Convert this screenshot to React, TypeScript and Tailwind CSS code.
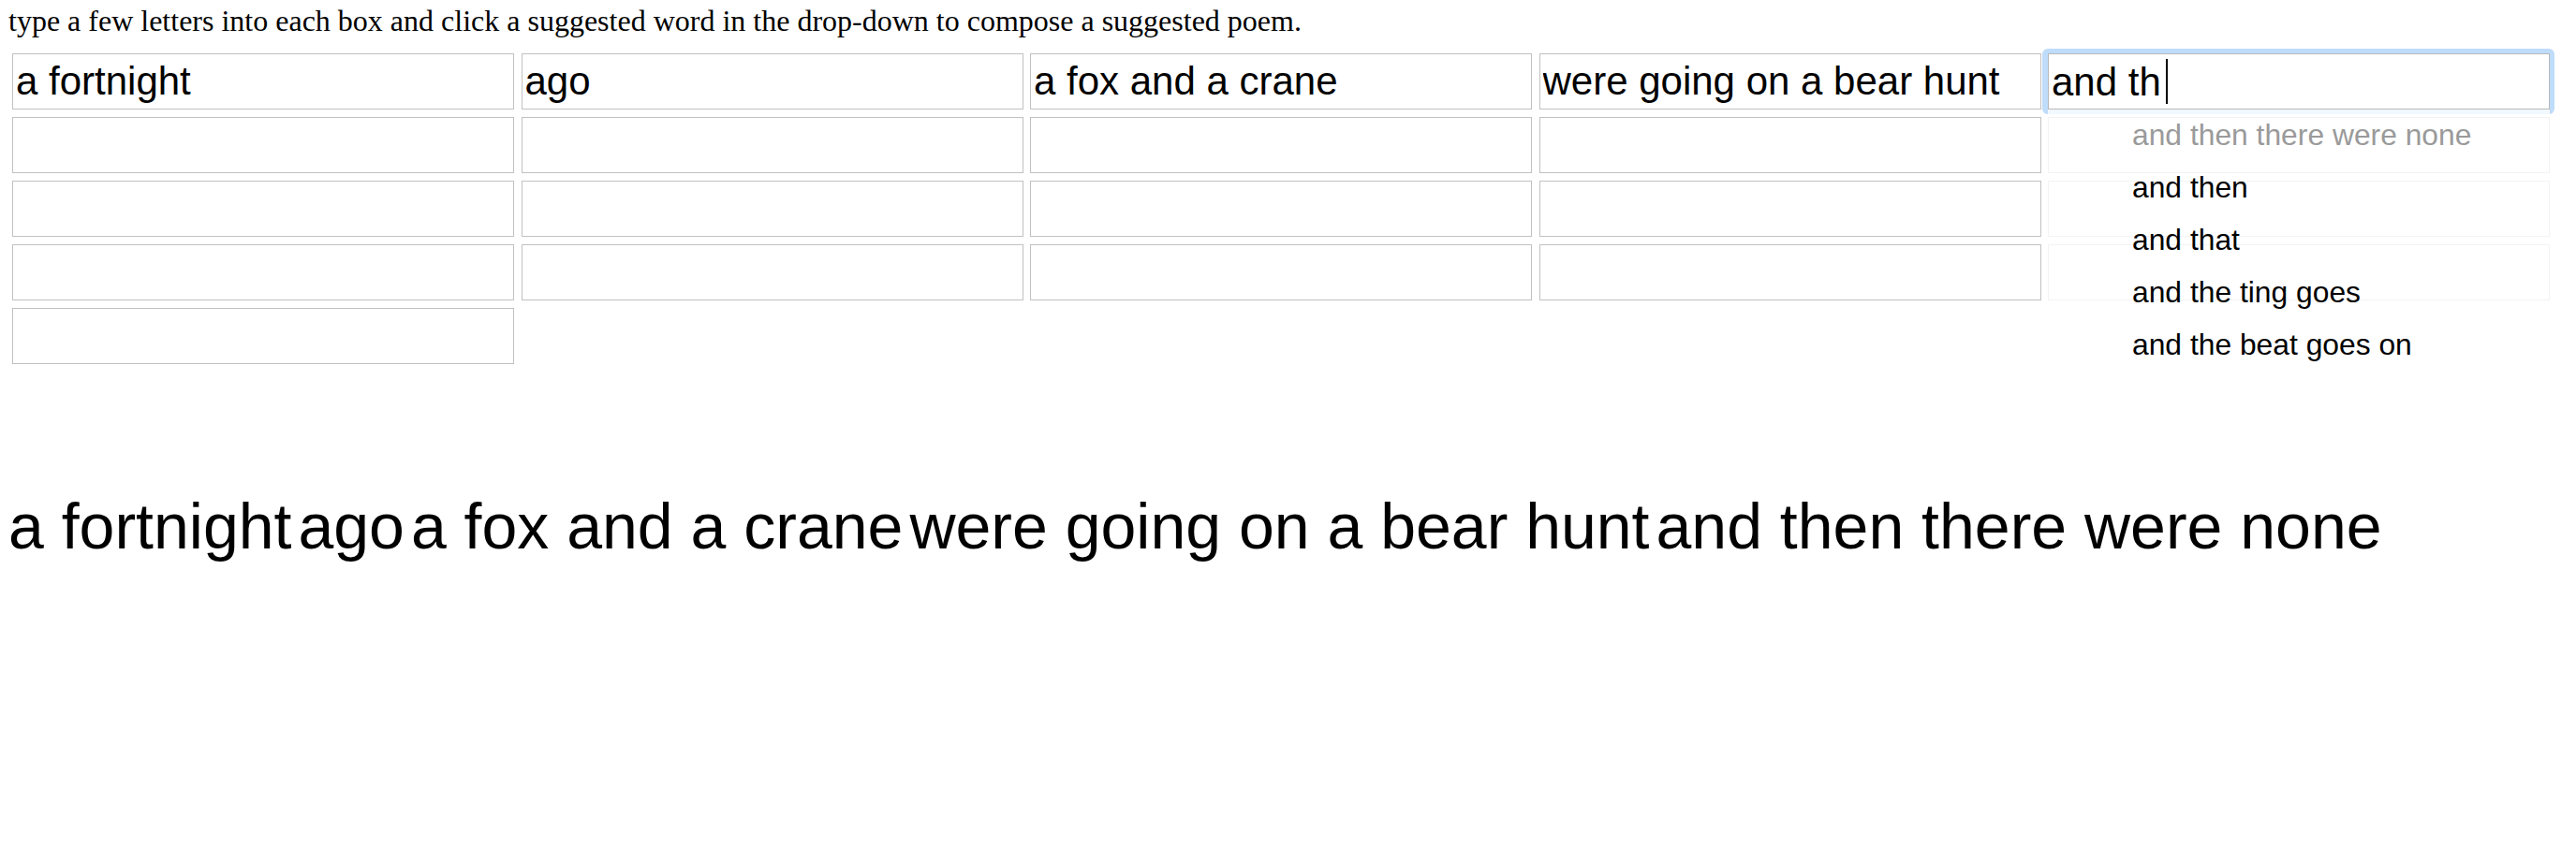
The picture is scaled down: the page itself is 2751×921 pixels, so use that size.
import React from 'react';

const lines = ['a fortnight', 'ago', 'a fox and a crane', 'were going on a bear hunt'];
const typed = 'and th';
const suggestions = [
  'and then there were none',
  'and then',
  'and that',
  'and the ting goes',
  'and the beat goes on',
];
const poem = [...lines, suggestions[0]];

const sans = "font-['Liberation_Sans',Arial,Helvetica,sans-serif]";

const Box: React.FC<{ value?: string }> = ({ value = '' }) => (
  <input
    type="text"
    readOnly
    value={value}
    className={`block w-full h-full border border-[#c1c1c1] bg-white px-[3px] text-[42px] text-black outline-none ${sans}`}
  />
);

const FocusedBox: React.FC = () => (
  <div className="relative z-20 h-full">
    {/* mac style focus ring */}
    <div className="absolute -top-[5px] -bottom-[5px] -left-[6px] -right-[5px] rounded-[6px] bg-[#bfdcfa]"></div>
    <div className={`relative flex items-center h-full border border-[#b9b9b9] bg-white px-[3px] text-[42px] text-black ${sans}`}>
      <span className="whitespace-pre">{typed}</span>
      <span className="inline-block w-[2px] h-[48px] bg-black ml-[5px]"></span>
    </div>

    {/* suggestion drop-down */}
    <ul className={`absolute left-0 right-0 top-[60px] bg-white/80 ${sans}`}>
      {suggestions.map((s, i) => (
        <li
          key={s}
          className={`h-[56px] flex items-center pl-[90px] text-[31.8px] ${i === 0 ? 'text-[#9a9a9a]' : 'text-black'}`}
        >
          {s}
        </li>
      ))}
    </ul>
  </div>
);

export default function App() {
  const cells: React.ReactNode[] = [];
  for (let i = 0; i < 21; i++) {
    if (i === 4) cells.push(<FocusedBox key={i} />);
    else cells.push(<Box key={i} value={i < 4 ? lines[i] : ''} />);
  }

  return (
    <div className="w-[2751px] min-h-[921px] bg-white text-black">
      <p className="pl-[9px] pt-[4px] text-[32px] leading-[36px] font-['Liberation_Serif','Times_New_Roman',serif]">
        type a few letters into each box and click a suggested word in the drop-down to compose a suggested poem.
      </p>

      <div className="mt-[17px] ml-[13px] grid grid-cols-[repeat(5,536px)] auto-rows-[60px] gap-x-[7.5px] gap-y-[8px]">
        {cells}
      </div>

      <div className={`mt-[134px] pl-[9px] text-[68px] leading-[79px] text-black ${sans}`}>
        {poem.map((p) => (
          <span key={p} className="whitespace-pre mr-[7px]">{p}</span>
        ))}
      </div>
    </div>
  );
}
